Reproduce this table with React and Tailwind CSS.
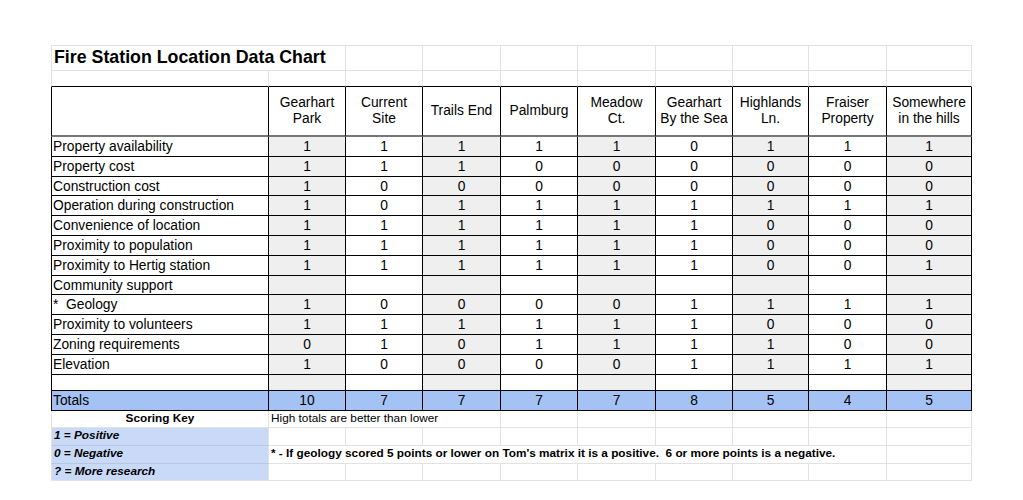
const COLS = [218, 77, 77, 78, 77, 78, 77, 76, 78, 85];

const SITES = [
  ['Gearhart', 'Park'],
  ['Current', 'Site'],
  ['Trails End'],
  ['Palmburg'],
  ['Meadow', 'Ct.'],
  ['Gearhart', 'By the Sea'],
  ['Highlands', 'Ln.'],
  ['Fraiser', 'Property'],
  ['Somewhere', 'in the hills'],
];

const ROWS = [
  ['Property availability', [1, 1, 1, 1, 1, 0, 1, 1, 1]],
  ['Property cost', [1, 1, 1, 0, 0, 0, 0, 0, 0]],
  ['Construction cost', [1, 0, 0, 0, 0, 0, 0, 0, 0]],
  ['Operation during construction', [1, 0, 1, 1, 1, 1, 1, 1, 1]],
  ['Convenience of location', [1, 1, 1, 1, 1, 1, 0, 0, 0]],
  ['Proximity to population', [1, 1, 1, 1, 1, 1, 0, 0, 0]],
  ['Proximity to Hertig station', [1, 1, 1, 1, 1, 1, 0, 0, 1]],
  ['Community support', null],
  ['*  Geology', [1, 0, 0, 0, 0, 1, 1, 1, 1]],
  ['Proximity to volunteers', [1, 1, 1, 1, 1, 1, 0, 0, 0]],
  ['Zoning requirements', [0, 1, 0, 1, 1, 1, 1, 0, 0]],
  ['Elevation', [1, 0, 0, 0, 0, 1, 1, 1, 1]],
];

const TOTALS = [10, 7, 7, 7, 7, 8, 5, 4, 5];

const grid = 'border-r border-b border-[#e2e2e2]';
const dark = 'border-r border-b border-black';
const shade = (i) => (i % 2 === 0 ? 'bg-[#efefef]' : 'bg-white');

export default function App() {
  return (
    <div className="min-h-[500px] bg-white pl-[51px] pt-[45px] text-black" style={{ fontFamily: '"Liberation Sans", Arial, sans-serif' }}>
      <table className="table-fixed border-separate border-spacing-0" style={{ width: 921 }}>
        <colgroup>
          {COLS.map((w, i) => <col key={i} style={{ width: w }} />)}
        </colgroup>
        <tbody>
          {/* Title */}
          <tr>
            <td colSpan={2} className={`${grid} border-t border-l h-[26px] pl-[2px] text-[17.8px] font-bold leading-none align-middle`}>
              Fire Station Location Data Chart
            </td>
            {COLS.slice(2).map((_, i) => <td key={i} className={`${grid} border-t`} />)}
          </tr>
          <tr>
            {COLS.map((_, i) => (
              <td key={i} className={`border-r border-b border-r-[#e2e2e2] border-b-black h-[16px] ${i === 0 ? 'border-l border-l-[#e2e2e2]' : ''}`} />
            ))}
          </tr>

          {/* Header */}
          <tr>
            <td className="border-l border-r border-b-2 border-l-black border-r-black border-b-[#777] h-[50px]" />
            {SITES.map((s, i) => (
              <td key={i} className="border-r border-b-2 border-r-black border-b-[#777] text-center align-middle text-[13.8px] leading-[16px]">
                {s.map((l) => <div key={l}>{l}</div>)}
              </td>
            ))}
          </tr>

          {/* Data */}
          {ROWS.map(([label, vals]) => (
            <tr key={label}>
              <td className={`${dark} border-l h-[19.8px] pl-[1px] pt-[1px] text-[13.8px] leading-none whitespace-pre`}>{label}</td>
              {SITES.map((_, i) => (
                <td key={i} className={`${dark} ${shade(i)} pt-[1px] text-center text-[13.8px] leading-none`}>
                  {vals ? vals[i] : ''}
                </td>
              ))}
            </tr>
          ))}
          <tr>
            <td className={`${dark} border-l h-[16px]`} />
            {SITES.map((_, i) => <td key={i} className={`${dark} ${shade(i)}`} />)}
          </tr>

          {/* Totals */}
          <tr className="bg-[#a4c2f4]">
            <td className={`${dark} border-l h-[20px] pl-[1px] pt-[1px] text-[13.8px] leading-none`}>Totals</td>
            {TOTALS.map((t, i) => (
              <td key={i} className={`${dark} pt-[1px] text-center text-[13.8px] leading-none`}>{t}</td>
            ))}
          </tr>

          {/* Scoring key */}
          <tr>
            <td className={`${grid} border-l h-[17px] text-center text-[11.8px] font-bold leading-none`}>Scoring Key</td>
            <td colSpan={3} className={`${grid} pl-[2px] text-[11.8px] leading-none whitespace-nowrap`}>High totals are better than lower</td>
            {COLS.slice(4).map((_, i) => <td key={i} className={grid} />)}
          </tr>
          <tr>
            <td className="border-l border-r border-b border-l-[#e2e2e2] border-r-[#e2e2e2] border-b-[#b9c8e2] bg-[#c9daf8] h-[18px] pl-[2px] text-[11.8px] font-bold italic leading-none">1 = Positive</td>
            {COLS.slice(1).map((_, i) => <td key={i} className={grid} />)}
          </tr>
          <tr>
            <td className="border-l border-r border-b border-l-[#e2e2e2] border-r-[#e2e2e2] border-b-[#b9c8e2] bg-[#c9daf8] h-[18px] pl-[2px] text-[11.8px] font-bold italic leading-none">0 = Negative</td>
            <td colSpan={8} className={`${grid} pl-[2px] text-[11.8px] font-bold leading-none whitespace-pre`}>
              {"* - If geology scored 5 points or lower on Tom's matrix it is a positive.  6 or more points is a negative."}
            </td>
            <td className={grid} />
          </tr>
          <tr>
            <td className="border-l border-r border-b border-[#e2e2e2] bg-[#c9daf8] h-[17px] pl-[2px] text-[11.8px] font-bold italic leading-none">? = More research</td>
            {COLS.slice(1).map((_, i) => <td key={i} className={grid} />)}
          </tr>
        </tbody>
      </table>
    </div>
  );
}
